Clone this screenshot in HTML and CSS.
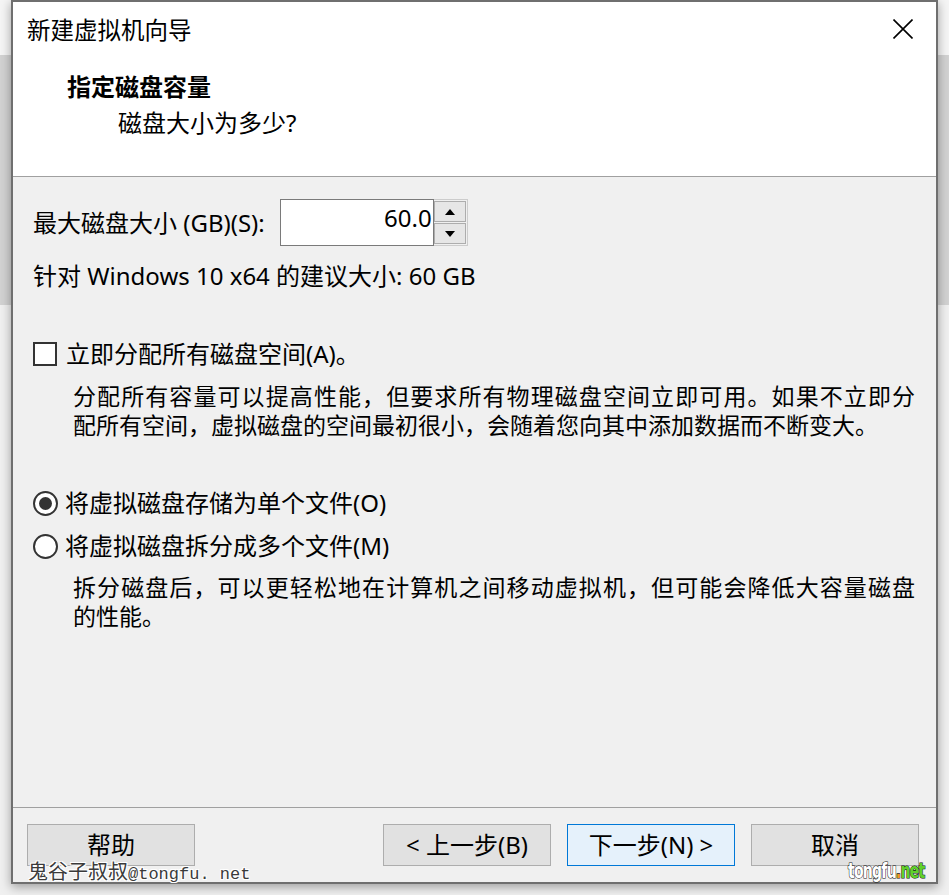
FILE: index.html
```html
<!DOCTYPE html>
<html lang="zh-CN">
<head>
<meta charset="utf-8">
<title>新建虚拟机向导</title>
<link rel="stylesheet" href="styles.css">
</head>
<body>
<div class="dialog">
  <div class="top">
    <div class="titlebar">
      <span class="title">新建虚拟机向导</span>
      <svg class="close" width="20" height="20" viewBox="0 0 20 20"><path d="M0.5 0.5 L19.5 19.5 M19.5 0.5 L0.5 19.5" stroke="#000" stroke-width="1.6" fill="none"/></svg>
    </div>
    <div class="heading">指定磁盘容量</div>
    <div class="subheading">磁盘大小为多少?</div>
  </div>
  <div class="content">
    <div class="size-row">
      <span class="label">最大磁盘大小 (GB)(S):</span>
      <div class="spin">
        <div class="spin-field">60.0</div>
        <div class="spin-buttons">
          <div class="spin-btn"><svg width="10" height="6" viewBox="0 0 10 6"><path d="M5 0 L10 6 L0 6 Z" fill="#000"/></svg></div>
          <div class="spin-btn"><svg width="10" height="6" viewBox="0 0 10 6"><path d="M0 0 L10 0 L5 6 Z" fill="#000"/></svg></div>
        </div>
      </div>
    </div>
    <div class="recommend">针对 Windows 10 x64 的建议大小: 60 GB</div>
    <div class="check-row">
      <span class="checkbox"></span>
      <span class="opt-label">立即分配所有磁盘空间(A)。</span>
    </div>
    <div class="desc desc-a">
      <div class="line full">分配所有容量可以提高性能，但要求所有物理磁盘空间立即可用。如果不立即分</div>
      <div class="line">配所有空间，虚拟磁盘的空间最初很小，会随着您向其中添加数据而不断变大。</div>
    </div>
    <div class="radio-row first">
      <span class="radio checked"></span>
      <span class="opt-label">将虚拟磁盘存储为单个文件(O)</span>
    </div>
    <div class="radio-row second">
      <span class="radio"></span>
      <span class="opt-label">将虚拟磁盘拆分成多个文件(M)</span>
    </div>
    <div class="desc desc-b">
      <div class="line full">拆分磁盘后，可以更轻松地在计算机之间移动虚拟机，但可能会降低大容量磁盘</div>
      <div class="line">的性能。</div>
    </div>
  </div>
  <div class="footer">
    <button class="btn">帮助</button>
    <span class="spacer"></span>
    <button class="btn">&lt; 上一步(B)</button>
    <button class="btn primary">下一步(N) &gt;</button>
    <button class="btn">取消</button>
  </div>
  <div class="wm-left">鬼谷子叔叔<span class="wm-mono">@tongfu. net</span></div>
  <div class="wm-right">tongfu<span class="dot">.</span><span class="net">net</span></div>
</div>
</body>
</html>
```

FILE: styles.css
```css
* { box-sizing: border-box; }

body {
  margin: 0;
  width: 949px;
  height: 895px;
  overflow: hidden;
  background: linear-gradient(to bottom, #f5f5f5 0, #f5f5f5 55px, #d2d2d2 55px, #d2d2d2 305px, #f0f0f0 305px);
  font-family: "Noto Sans", "Noto Sans CJK SC", sans-serif;
  color: #000;
}

.dialog {
  position: relative;
  margin-left: 11px;
  width: 927px;
  height: 884px;
  border: 2px solid #6f6f6f;
  background: #f0f0f0;
  display: flex;
  flex-direction: column;
  box-shadow: 0 3px 10px rgba(0, 0, 0, 0.35);
}

.top {
  height: 175px;
  background: #fff;
  border-bottom: 1px solid #a0a0a0;
  flex: none;
}

.titlebar {
  height: 54px;
  display: flex;
  align-items: center;
  justify-content: space-between;
  padding: 0 23px 0 14px;
}

.title {
  font-family: "Noto Sans CJK SC", sans-serif;
  font-size: 23.5px;
  line-height: 54px;
}

.close { display: block; }

.heading {
  margin-top: 14px;
  padding-left: 54px;
  font-family: "Noto Sans CJK SC", sans-serif;
  font-weight: bold;
  font-size: 24px;
  line-height: 32px;
}

.subheading {
  margin-top: 5px;
  padding-left: 105px;
  font-size: 24px;
  line-height: 32px;
}

.content {
  height: 631px;
  flex: none;
  border-bottom: 1px solid #a0a0a0;
  padding-left: 20px;
  padding-top: 22px;
  font-size: 24px;
}

.size-row {
  display: flex;
  align-items: center;
  height: 47px;
}

.label { line-height: 32px; margin-right: 15px; }

.spin {
  display: flex;
  height: 47px;
}

.spin-field {
  width: 154px;
  height: 47px;
  border: 1px solid #7a7a7a;
  background: #fff;
  text-align: right;
  padding-right: 1px;
  font-size: 24px;
  line-height: 36px;
}

.spin-buttons {
  width: 34px;
  height: 47px;
  border: 1px solid #cccccc;
  border-left: none;
  display: flex;
  flex-direction: column;
  padding: 1px 1px 1px 0;
  gap: 1px;
}

.spin-btn {
  flex: 1;
  background: #e6e6e6;
  border: 1px solid #adadad;
  display: flex;
  align-items: center;
  justify-content: center;
}

.spin-btn svg { display: block; }

.recommend {
  margin-top: 14px;
  line-height: 32px;
}

.check-row,
.radio-row {
  display: flex;
  align-items: center;
  height: 32px;
}

.check-row { margin-top: 46px; }

.checkbox {
  width: 24px;
  height: 24px;
  border: 2px solid #333;
  background: #fff;
  margin-right: 9px;
  flex: none;
}

.radio {
  width: 25px;
  height: 25px;
  border: 2px solid #333;
  border-radius: 50%;
  background: #fff;
  margin-right: 7px;
  flex: none;
  display: flex;
  align-items: center;
  justify-content: center;
}

.radio.checked::after {
  content: "";
  width: 13px;
  height: 13px;
  border-radius: 50%;
  background: #333;
}

.opt-label { line-height: 32px; }

.desc {
  margin-left: 40px;
  width: 842px;
  font-family: "Noto Sans CJK SC", sans-serif;
  font-size: 23px;
  line-height: 29px;
}

.desc .line { white-space: nowrap; height: 29px; }
.desc .line.full { text-align: justify; text-align-last: justify; }

.desc-a { margin-top: 11px; }

.radio-row.first { margin-top: 48px; }
.radio-row.second { margin-top: 11px; }

.desc-b { margin-top: 10px; }

.footer {
  flex: 1;
  display: flex;
  align-items: flex-start;
  padding: 16px 17px 0 14px;
  gap: 16px;
}

.spacer { flex: 1; }

.btn {
  width: 168px;
  height: 42px;
  background: #e1e1e1;
  border: 1px solid #adadad;
  font-family: "Noto Sans", "Noto Sans CJK SC", sans-serif;
  font-size: 24px;
  color: #000;
  padding: 0;
  line-height: 38px;
}

.btn.primary {
  background: #e5f1fb;
  border-color: #0078d7;
}

.wm-left {
  position: absolute;
  left: 15px;
  top: 856px;
  font-family: "Noto Sans CJK SC", sans-serif;
  font-size: 20px;
  line-height: 26px;
  color: #3a3a3a;
  text-shadow: 1px 1px 0 #fff, -1px -1px 0 #fff, 1px -1px 0 #fff, -1px 1px 0 #fff;
}

.wm-mono {
  font-family: "Liberation Mono", monospace;
  font-size: 17px;
}

.wm-right {
  position: absolute;
  left: 835px;
  top: 856px;
  font-family: "DejaVu Sans Condensed", "DejaVu Sans", sans-serif;
  font-weight: bold;
  font-size: 21px;
  line-height: 26px;
  letter-spacing: -1px;
  color: #fff;
  -webkit-text-stroke: 1.2px #111;
  paint-order: stroke fill;
  transform: scaleX(0.74);
  transform-origin: left center;
}

.wm-right .dot { color: #f29a1f; }
.wm-right .net { color: #5fd12a; }
```
